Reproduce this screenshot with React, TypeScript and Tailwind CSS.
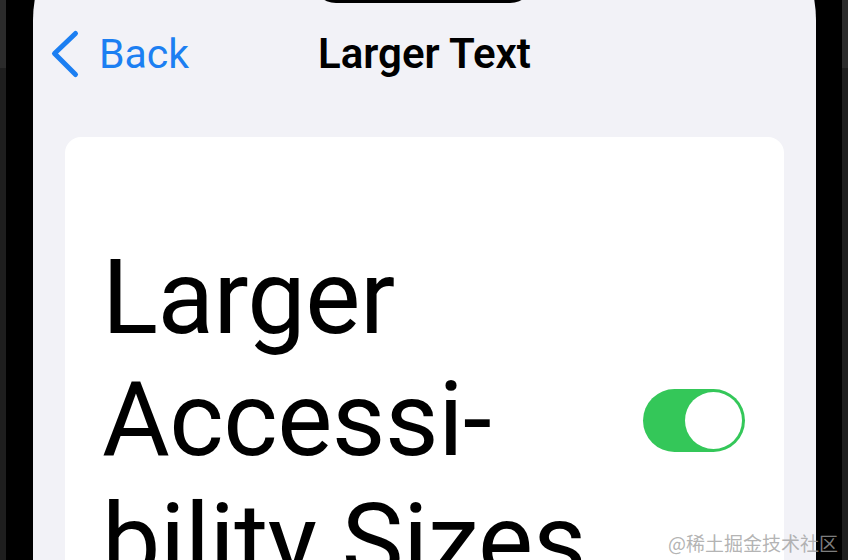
import React, { useState } from 'react';

const SideStrip: React.FC = () => (
  <div className="flex w-[6px] shrink-0 flex-col">
    <div className="h-[68px] bg-[#2b2b2b]" />
    <div className="flex-1 bg-[#1e1e1e]" />
  </div>
);

const BackChevron: React.FC = () => (
  <svg width="30" height="50" viewBox="0 0 30 50" fill="none" stroke="currentColor" strokeWidth={5} strokeLinecap="round" strokeLinejoin="round">
    <polyline points="25.5,4.5 4.5,24.5 25.5,45.5" />
  </svg>
);

const Toggle: React.FC<{ on: boolean; onChange: (v: boolean) => void }> = ({ on, onChange }) => (
  <button
    role="switch"
    aria-checked={on}
    onClick={() => onChange(!on)}
    className={`flex h-[63px] w-[102px] shrink-0 items-center rounded-full px-[3px] transition-colors ${on ? 'justify-end bg-[#34c759]' : 'justify-start bg-[#e9e9eb]'}`}
  >
    <span className="h-[57px] w-[57px] rounded-full bg-white" />
  </button>
);

const App: React.FC = () => {
  const [largeSizes, setLargeSizes] = useState(true);

  return (
    <div className="relative flex h-[560px] w-[848px] overflow-hidden bg-black font-['Roboto','Liberation_Sans',sans-serif]">
      <SideStrip />
      <div className="flex flex-1 bg-black pl-[27px] pr-[26px]">
        <div className="mt-[-100px] flex h-[720px] flex-1 flex-col rounded-t-[120px] bg-[#f2f2f7]">
          {/* dynamic island */}
          <div className="flex justify-center pr-[4px]">
            <div className="h-[103px] w-[222px] rounded-b-[24px] bg-black" />
          </div>

          {/* nav bar */}
          <div className="grid h-[102px] grid-cols-[1fr_auto_1fr] items-center">
            <button className="flex items-center justify-self-start pl-[17px] text-[#1c7ff2]">
              <BackChevron />
              <span className="ml-[19px] text-[41px] leading-none">Back</span>
            </button>
            <h1 className="text-[42px] font-semibold leading-none text-black">Larger Text</h1>
            <div />
          </div>

          {/* settings card */}
          <div className="mx-[32px] mt-[32px] flex items-center justify-between rounded-[16px] bg-white pl-[37px] pr-[39px] pt-[100px]">
            <p className="text-[104px] leading-[122px] tracking-[-0.5px] text-black">
              Larger
              <br />
              Accessi-
              <br />
              bility Sizes
            </p>
            <Toggle on={largeSizes} onChange={setLargeSizes} />
          </div>
        </div>
      </div>
      <SideStrip />

      <span className="absolute bottom-[5px] right-[10px] font-['Noto_Sans_CJK_SC',sans-serif] text-[19px] leading-[24px] text-[#a0a0a0]/80">
        @稀土掘金技术社区
      </span>
    </div>
  );
};

export default App;
